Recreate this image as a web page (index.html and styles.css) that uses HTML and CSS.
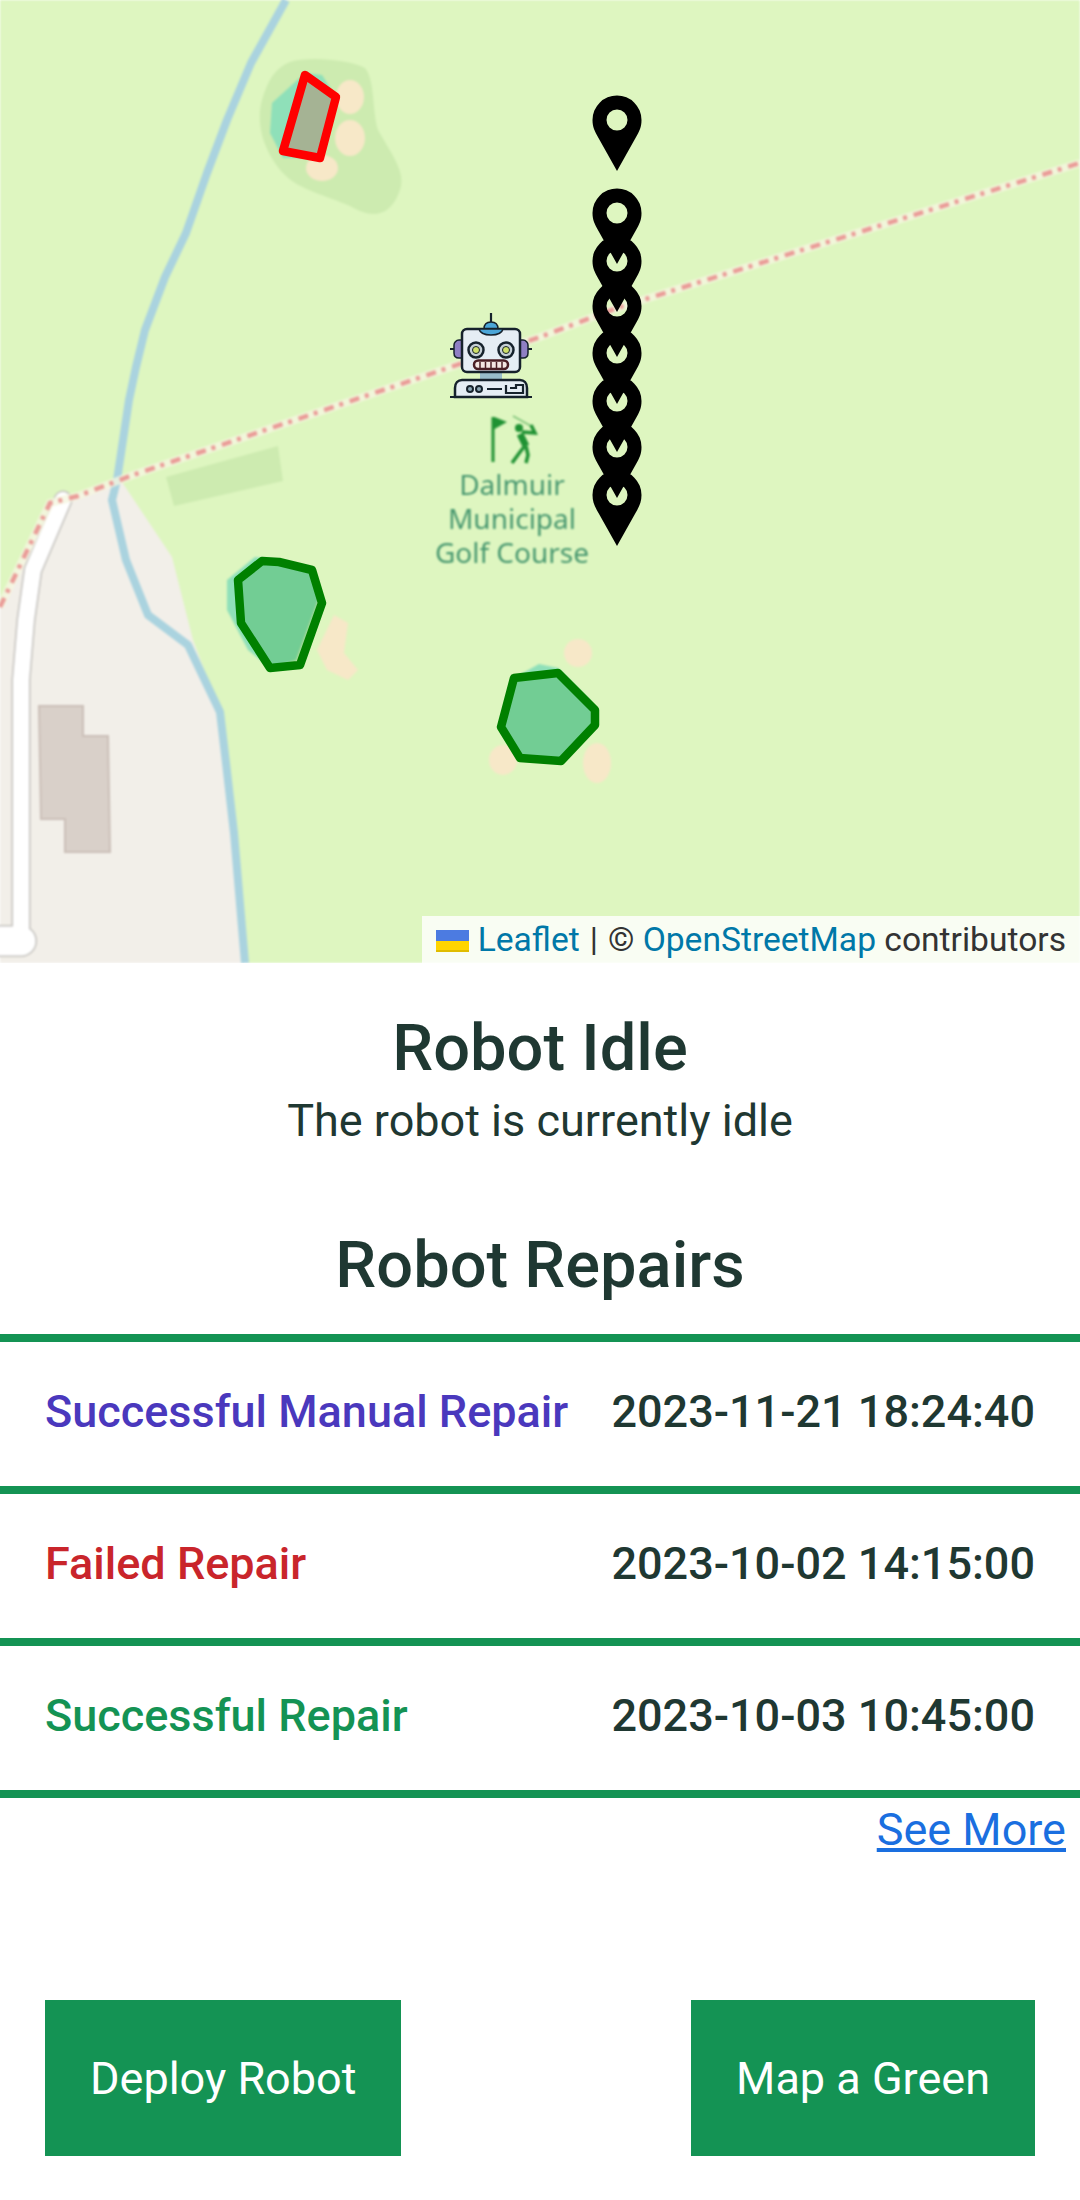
FILE: index.html
```html
<!DOCTYPE html>
<html lang="en">
  <head>
    <meta charset="UTF-8" />
    <title>Robot</title>
    <link rel="stylesheet" href="styles.css">
  </head>
  <body>
    <div class="map">
      <svg class="map-svg" width="1080" height="963" viewBox="0 0 1080 963">
        <defs>
          <path id="pin" fill-rule="evenodd" d="M0 51L-18.500 18C-22.500 11-24.500 7-24.500 0A24.500 24.500 0 0 1 24.500 0C24.500 7 22.500 11 18.500 18ZM0-10.500A10.500 10.500 0 1 0 0 10.500A10.500 10.500 0 1 0 0-10.500Z" />
        </defs>

        <!-- base map -->
        <g class="tiles">
          <rect width="1080" height="963" fill="#def6c0" />
          <path fill="#f2efe9" d="M0 607L24 557L52 503L76 495L122 482L172 557L193 640L220 712L226 763L234 833L245 963H0Z" />
          <path fill="#cdebb0" d="M290 62C310 56 350 60 365 68C375 80 372 110 378 130C395 160 408 175 398 195C388 218 370 218 350 206C325 195 300 190 285 175C265 155 255 125 262 100C268 80 275 68 290 62Z" />
          <path fill="#cdebb0" d="M166 477L278 446L283 481L174 506Z" />
          <path fill="#d9d0c9" stroke="#cbbfb8" stroke-width="2" d="M39 706H83V736H108L110 852H65V819H41Z" />

          <g fill="#f7e8c8">
            <ellipse cx="350" cy="97" rx="14" ry="17" />
            <ellipse cx="350" cy="138" rx="15" ry="18" />
            <ellipse cx="322" cy="168" rx="16" ry="13" />
            <path d="M334 615L348 623L344 653L358 670L348 680L327 670L317 650Z" />
            <ellipse cx="578" cy="653" rx="14" ry="14" />
            <ellipse cx="503" cy="760" rx="14" ry="15" />
            <ellipse cx="597" cy="763" rx="14" ry="20" />
          </g>

          <g fill="#8fe0b9">
            <path d="M305 73L322 75L336 97L320 158L283 158L270 133L272 103Z" />
            <path d="M255 557L280 560L314 572L318 600L296 660L270 668L248 650L227 610L227 580Z" />
            <path d="M539 664L558 668L590 700L595 725L561 761L520 758L501 727L514 678Z" />
          </g>

          <path class="road-casing" d="M63 500L33 570L26 620L21 680V941" />
          <path class="road-casing road-end" d="M21 941H-10" />
          <path class="road" d="M63 500L33 570L26 620L21 680V941" />
          <path class="road road-end" d="M21 941H-10" />

          <path class="river" d="M286 0L251 63L227 120L207 173L186 233L165 277L145 330L136 367L129 400L117 480L112 500L126 560L148 615L188 645L220 712L226 763L234 833L245 963" />

          <path class="track-halo" d="M0 607L25 555L50 503L78 496L133 475L451 367L540 337L617 308L1080 163" />
          <path class="track" d="M0 607L25 555L50 503L78 496L133 475L451 367L540 337L617 308L1080 163" />

          <!-- golf course label -->
          <g class="golf-icon">
            <path class="golf-flag" d="M491.500 417H494.500V462H491.500ZM494.500 417L507 422L494.500 429Z" />
            <circle cx="519" cy="428" r="4" />
            <path class="golf-body" d="M520 434L526 446" />
            <path class="golf-limb" d="M522 432L535 433L531 425M524 447L520 452L512 463M526 446L528 455L526 463" />
            <path class="golf-club" d="M531 426L513 416" />
          </g>
          <text class="golf-label" x="512" y="495">Dalmuir</text>
          <text class="golf-label" x="512" y="529">Municipal</text>
          <text class="golf-label" x="512" y="563">Golf Course</text>
        </g>

        <!-- greens -->
        <path class="green-good" d="M262 561L279 562L312 570L322 603L300 665L270 668L241 623L238 580Z" />
        <path class="green-good" d="M514 678L558 673L595 710L595 725L561 761L520 758L501 727Z" />
        <path class="green-bad" d="M305 75L336 97L320 158L283 151Z" />

        <!-- robot marker -->
        <g class="robot">
          <path class="robot-line" d="M491 313V323" />
          <path class="robot-dome" d="M484 329C484 324 487 322 491 322C495 322 498 324 498 329Z" />
          <path class="robot-ear" d="M462 340H459C456 340 454 343 454 345V353C454 356 456 358 459 358H462Z" />
          <path class="robot-ear" d="M520 340H523C526 340 528 343 528 345V353C528 356 526 358 523 358H520Z" />
          <path class="robot-line" d="M450 349H454M528 349H532" />
          <rect class="robot-neck" x="480" y="371" width="22" height="9" />
          <rect class="robot-head" x="462" y="329" width="58" height="43" rx="5" />
          <path class="robot-cap" d="M479 329H503C502 333 498 335 491 335C484 335 480 333 479 329Z" />
          <circle class="robot-eye" cx="476" cy="350" r="7.5" />
          <circle class="robot-eye" cx="506" cy="350" r="7.5" />
          <circle class="robot-pupil" cx="476" cy="350" r="3.500" />
          <circle class="robot-pupil" cx="506" cy="350" r="3.500" />
          <rect class="robot-mouth" x="474" y="360.500" width="34" height="8.500" rx="4.200" />
          <path class="robot-teeth" d="M480 362V368M485.500 362V368M491 362V368M496.500 362V368M502 362V368" />
          <path class="robot-base" d="M455 397V388C455 383 458 380 462 380H520C524 380 527 383 527 388V397Z" />
          <path class="robot-line" d="M450 397H532" />
          <circle class="robot-dot" cx="470" cy="389" r="3" />
          <circle class="robot-dot" cx="479" cy="389" r="3" />
          <path class="robot-line" d="M487 389H502M506 385V393H523V385H516V388H510" />
        </g>

        <!-- waypoint pins -->
        <g class="pins">
          <use href="#pin" x="617" y="120" />
          <use href="#pin" x="617" y="213" />
          <use href="#pin" x="617" y="261" />
          <use href="#pin" x="617" y="306" />
          <use href="#pin" x="617" y="353" />
          <use href="#pin" x="617" y="401" />
          <use href="#pin" x="617" y="447" />
          <use href="#pin" x="617" y="495" />
        </g>
      </svg>

      <div class="attribution">
        <a href="#" class="attr-link"><svg class="flag" width="33" height="22" viewBox="0 0 33 22"><rect width="33" height="11" fill="#4c7be1" /><rect y="11" width="33" height="9" fill="#ffd500" /><rect y="20" width="33" height="2" fill="#e0bc00" /></svg> Leaflet</a>
        <span class="attr-sep">|</span>
        <span>© <a href="#" class="attr-link">OpenStreetMap</a> contributors</span>
      </div>
    </div>

    <div class="status">
      <h2 class="title">Robot Idle</h2>
      <p class="status-text">The robot is currently idle</p>
    </div>

    <h2 class="title repairs-title">Robot Repairs</h2>

    <div class="repairs">
      <div class="repair-row">
        <span class="repair-name manual">Successful Manual Repair</span>
        <span class="repair-date">2023-11-21 18:24:40</span>
      </div>
      <div class="repair-row">
        <span class="repair-name failed">Failed Repair</span>
        <span class="repair-date">2023-10-02 14:15:00</span>
      </div>
      <div class="repair-row">
        <span class="repair-name success">Successful Repair</span>
        <span class="repair-date">2023-10-03 10:45:00</span>
      </div>
    </div>
    <div class="see-more"><a href="#">See More</a></div>

    <div class="actions">
      <button class="action-btn">Deploy Robot</button>
      <button class="action-btn">Map a Green</button>
    </div>
  </body>
</html>
```

FILE: styles.css
```css
body {
  margin: 0;
  background-color: #fff;
  color: #1f3832;
  font-family: Roboto, "Liberation Sans", sans-serif;
  font-size: 45px;
}
.map {
  position: relative;
  height: 963px;
  overflow: hidden;
}
.map-svg {
  display: block;
}
.tiles {
  filter: blur(0.8px);
}
.road-casing {
  fill: none;
  stroke: #c4c2be;
  stroke-width: 19;
  stroke-linecap: round;
  stroke-linejoin: round;
}
.road {
  fill: none;
  stroke: #fff;
  stroke-width: 16;
  stroke-linecap: round;
  stroke-linejoin: round;
}
.road-casing.road-end {
  stroke-width: 32;
}
.road.road-end {
  stroke-width: 29;
}
.river {
  fill: none;
  stroke: #aad3df;
  stroke-width: 8;
  stroke-linejoin: round;
}
.track-halo {
  fill: none;
  stroke: #f5f6e0;
  stroke-width: 8;
  opacity: 0.8;
}
.track {
  fill: none;
  stroke: #ea9c98;
  stroke-width: 4.5;
  stroke-dasharray: 10 6 4 7;
}
.golf-icon {
  fill: #1f9233;
}
.golf-body {
  fill: none;
  stroke: #1f9233;
  stroke-width: 7;
}
.golf-limb {
  fill: none;
  stroke: #1f9233;
  stroke-width: 3.5;
}
.golf-club {
  fill: none;
  stroke: #1f9233;
  stroke-width: 1.5;
  opacity: 0.5;
}
.golf-label {
  fill: #48986f;
  font-family: "Noto Sans", sans-serif;
  font-size: 28px;
  text-anchor: middle;
}
.green-good,
.green-bad {
  stroke-width: 8.5;
  stroke-linejoin: round;
}
.green-good {
  fill: rgba(0, 128, 0, 0.2);
  stroke: #008000;
}
.green-bad {
  fill: rgba(255, 0, 0, 0.2);
  stroke: #f00;
}
.robot-line {
  fill: none;
  stroke: #16222c;
  stroke-width: 2.2;
}
.robot-dome,
.robot-cap {
  fill: #4ba6d8;
  stroke: #16222c;
  stroke-width: 1.5;
}
.robot-ear {
  fill: #8f7fc4;
  stroke: #16222c;
  stroke-width: 1.5;
}
.robot-neck {
  fill: #98bdca;
}
.robot-head,
.robot-base {
  fill: #e5edf4;
  stroke: #16222c;
  stroke-width: 2.5;
}
.robot-eye {
  fill: #c6d0d6;
  stroke: #16222c;
  stroke-width: 2.5;
}
.robot-pupil {
  fill: #cfe06a;
  stroke: #16222c;
  stroke-width: 1;
}
.robot-mouth {
  fill: #f3e6e2;
  stroke: #4a1f25;
  stroke-width: 2.5;
}
.robot-teeth {
  fill: none;
  stroke: #4a1f25;
  stroke-width: 1.5;
}
.robot-dot {
  fill: #8ea9b6;
  stroke: #16222c;
  stroke-width: 2;
}
.attribution {
  position: absolute;
  right: 0;
  bottom: 0;
  display: flex;
  align-items: center;
  gap: 10px;
  height: 47px;
  padding: 0 14px;
  background-color: rgba(255, 255, 255, 0.8);
  color: #333;
  font-size: 33.6px;
  white-space: nowrap;
}
.attr-link {
  color: #0078a8;
  text-decoration: none;
}
.flag {
  vertical-align: -1px;
}
.status {
  text-align: center;
  padding-top: 48px;
}
.title {
  margin: 0;
  font-size: 65px;
  font-weight: 500;
  line-height: 74px;
  text-align: center;
}
.status-text {
  margin: 11px 0 0;
  line-height: 50px;
}
.repairs-title {
  margin-top: 82px;
}
.repairs {
  margin-top: 32px;
  border-bottom: 8px solid #149354;
}
.repair-row {
  display: flex;
  justify-content: space-between;
  align-items: center;
  box-sizing: border-box;
  height: 152px;
  padding: 0 45px 5px;
  border-top: 8px solid #149354;
  font-weight: 500;
}
.manual {
  color: #4a38bd;
}
.failed {
  color: #c9252b;
}
.success {
  color: #149354;
}
.see-more {
  text-align: right;
  padding: 5px 14px 0;
}
.see-more a {
  color: #1a6fe0;
}
.actions {
  display: flex;
  justify-content: space-between;
  padding: 0 45px;
  margin-top: 144px;
}
.action-btn {
  height: 156px;
  padding: 0 45px;
  border: none;
  background-color: #149354;
  color: #fff;
  font-family: inherit;
  font-size: 45px;
}
```
